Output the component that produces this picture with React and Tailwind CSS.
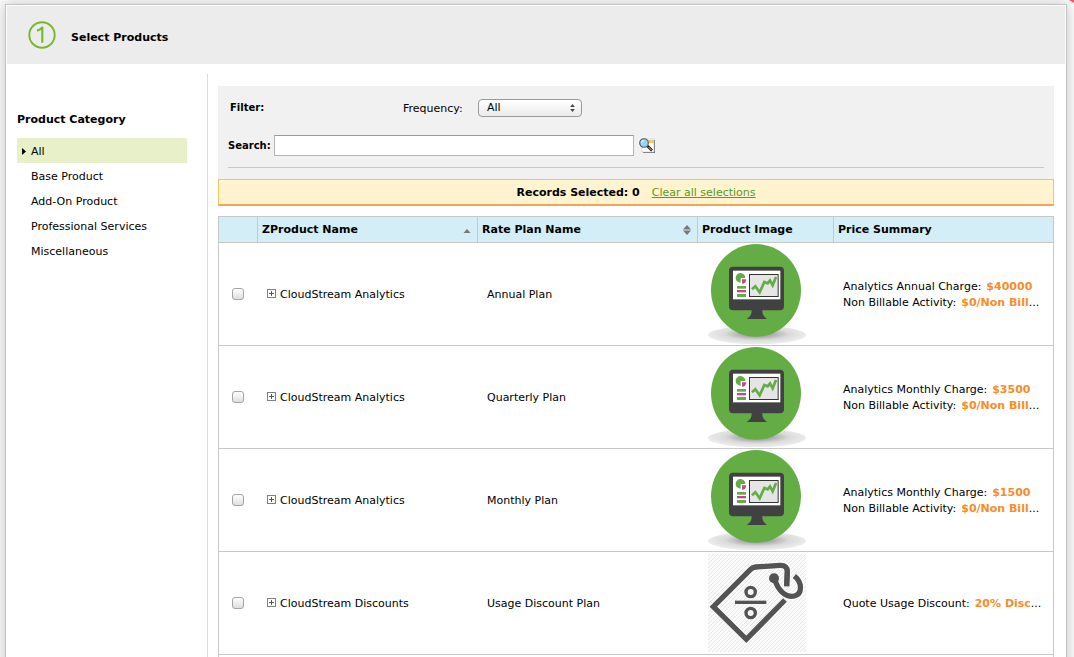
import React from "react";

const categories = ["All", "Base Product", "Add-On Product", "Professional Services", "Miscellaneous"];

const products = [
  {
    name: "CloudStream Analytics",
    plan: "Annual Plan",
    image: "analytics",
    prices: [
      { label: "Analytics Annual Charge:", value: "$40000" },
      { label: "Non Billable Activity:", value: "$0/Non Bill", more: true },
    ],
  },
  {
    name: "CloudStream Analytics",
    plan: "Quarterly Plan",
    image: "analytics",
    prices: [
      { label: "Analytics Monthly Charge:", value: "$3500" },
      { label: "Non Billable Activity:", value: "$0/Non Bill", more: true },
    ],
  },
  {
    name: "CloudStream Analytics",
    plan: "Monthly Plan",
    image: "analytics",
    prices: [
      { label: "Analytics Monthly Charge:", value: "$1500" },
      { label: "Non Billable Activity:", value: "$0/Non Bill", more: true },
    ],
  },
  {
    name: "CloudStream Discounts",
    plan: "Usage Discount Plan",
    image: "discount",
    prices: [{ label: "Quote Usage Discount:", value: "20% Disc", more: true }],
  },
];

function StepBadge() {
  return (
    <svg width="28" height="28" viewBox="0 0 28 28" fill="none" stroke="#78b82a" aria-hidden="true">
      <circle cx="14" cy="14" r="12.7" strokeWidth="1.9" />
      <path d="M9 9.600C11.800 9 13.800 7.800 14.300 5.800V21.800" strokeWidth="2.1" />
    </svg>
  );
}

function AnalyticsImage() {
  return (
    <svg width="98" height="100" viewBox="24 12 294 300" role="img" aria-label="Analytics monitor">
      <defs>
        <radialGradient id="floor" cx="0.5" cy="0.45" r="0.5">
          <stop offset="0" stopColor="#858585" />
          <stop offset="0.3" stopColor="#aaaaaa" />
          <stop offset="0.65" stopColor="#dadada" />
          <stop offset="1" stopColor="#ebebeb" />
        </radialGradient>
      </defs>
      <ellipse cx="171" cy="285" rx="147" ry="28" fill="url(#floor)" />
      <ellipse cx="168" cy="151" rx="135" ry="139" fill="#64ad45" />
      <rect x="87" y="80" width="165" height="131" rx="12" fill="#414143" />
      <path d="M155 208H187C186 222 191 230 201 237H140C151 230 156 222 155 208Z" fill="#414143" />
      <rect x="99" y="92" width="142" height="86" fill="#fff" />
      <path d="M122 114V128A14.500 14.500 0 1 1 136 114Z" fill="#64ad45" />
      <path d="M126 118H139A13 13 0 0 1 126 131Z" fill="#bf4b8b" />
      <rect x="111" y="138" width="27" height="8" fill="#64ad45" />
      <rect x="111" y="150" width="27" height="7" fill="#bf4b8b" />
      <rect x="111" y="162" width="27" height="9" fill="#64ad45" />
      <rect x="148.500" y="103.500" width="86" height="66" fill="#e5e5e5" stroke="#333" strokeWidth="3" />
      <path d="M156 148L166 139L179 157L193 126L203 130L210 121L218 136L228 111" fill="none" stroke="#64ad45" strokeWidth="8" />
    </svg>
  );
}

function DiscountImage() {
  return (
    <svg width="98" height="100" viewBox="24 15 294 300" role="img" aria-label="Discount tag">
      <defs>
        <pattern id="hatch" width="12" height="12" patternUnits="userSpaceOnUse">
          <path d="M-3 3L3 -3M0 12L12 0M9 15L15 9" stroke="#e8e8e8" strokeWidth="3" />
        </pattern>
      </defs>
      <rect x="24" y="18" width="294" height="294" fill="#fafafa" />
      <rect x="24" y="18" width="294" height="294" fill="url(#hatch)" />
      <path d="M255 156L139 274L40 176L151 65Q158 58 167 57L240 52Q261 51 262 70L260 115" fill="none" stroke="#fff" strokeWidth="20" />
      <path d="M255 156L139 274L40 176L151 65Q158 58 167 57L240 52Q261 51 262 70L260 115" fill="none" stroke="#535353" strokeWidth="16" />
      <path d="M224 92C234 132 261 149 283 144C307 139 308 103 283 84" fill="none" stroke="#fff" strokeWidth="22" />
      <path d="M262 66L260 114" stroke="#535353" strokeWidth="15" />
      <circle cx="222" cy="91" r="15" fill="#535353" />
      <path d="M224 92C234 132 261 149 283 144C307 139 308 103 283 84" fill="none" stroke="#535353" strokeWidth="16" />
      <g fill="none" stroke="#535353">
        <path d="M105 163H199" strokeWidth="10" />
        <circle cx="152" cy="132" r="14" strokeWidth="10" />
        <circle cx="152" cy="195" r="14" strokeWidth="10" />
      </g>
    </svg>
  );
}

function LookupIcon() {
  return (
    <svg width="17" height="16" viewBox="0 0 17 16" aria-hidden="true">
      <path d="M4 2H16V15H4Z" fill="#6e6e6e" />
      <path d="M3 1H15V14H3Z" fill="#fff" stroke="#c4c4c4" strokeWidth="0.6" />
      <path d="M8 2H15V5H8Z" fill="#f9c767" />
      <path d="M8.500 8L13 12.500" stroke="#222" strokeWidth="2.6" />
      <path d="M9.500 9L12.500 12" stroke="#d9b466" strokeWidth="1" />
      <circle cx="5" cy="5" r="4.300" fill="#9ed3ee" stroke="#3b5f80" strokeWidth="1.100" />
      <path d="M2.500 4.800A2.600 2.600 0 0 1 5 2.500" fill="none" stroke="#e4f6ff" strokeWidth="1.200" />
    </svg>
  );
}

function ExpandIcon() {
  return (
    <svg width="9" height="9" viewBox="0 0 9 9" fill="none" stroke="#808080" aria-hidden="true" shapeRendering="crispEdges">
      <rect x="0.500" y="0.500" width="8" height="8" />
      <path d="M2 4.500H7M4.500 2V7" stroke="#555" />
    </svg>
  );
}

function SortIcon({ both }) {
  return (
    <svg width="8" height="10" viewBox="0 0 8 10" fill="#777" aria-hidden="true">
      {both ? <path d="M4 0L8 4.500H0ZM4 10L8 5.500H0Z" /> : <path d="M4 4L7.500 8H0.500Z" />}
    </svg>
  );
}

function HeaderCell({ children, sort, last }) {
  return (
    <th
      scope="col"
      className={
        last
          ? "h-[26px] border-b border-[#c8c8c8] px-1 text-left font-bold"
          : "h-[26px] border-r border-b border-[#c8c8c8] px-1 text-left font-bold"
      }
    >
      {sort ? (
        <button type="button" className="flex w-full items-center justify-between pr-[2px] font-bold">
          {children}
          <SortIcon both={sort === "both"} />
        </button>
      ) : (
        children
      )}
    </th>
  );
}

function ProductRow({ product }) {
  return (
    <tr className="h-[103px]">
      <td className="border-b border-[#c8c8c8] pl-[13px]">
        <input
          type="checkbox"
          aria-label={`Select ${product.name} ${product.plan}`}
          className="block size-3 appearance-none rounded-[3px] border border-[#a4a4a4] bg-linear-to-b from-white to-[#dedede] checked:bg-[#78b82a]"
        />
      </td>
      <td className="border-b border-[#c8c8c8] pt-[2px] pl-[9px]">
        <button type="button" aria-label="Expand product" className="mr-1 inline-block">
          <ExpandIcon />
        </button>
        {product.name}
      </td>
      <td className="border-b border-[#c8c8c8] pt-[2px] pl-[9px]">{product.plan}</td>
      <td className="border-b border-[#c8c8c8] pl-[10px] [&>svg]:block">
        {product.image === "analytics" ? <AnalyticsImage /> : <DiscountImage />}
      </td>
      <td className="border-b border-[#c8c8c8] pt-[2px] pl-[9px] leading-4 whitespace-nowrap">
        {product.prices.map((price) => (
          <div key={price.label} className="flex gap-[5px]">
            <span>{price.label}</span>
            <span>
              <b className="text-[#fa8c28]">{price.value}</b>
              {price.more && "..."}
            </span>
          </div>
        ))}
      </td>
    </tr>
  );
}

export default function App() {
  return (
    <div className="relative flex h-screen flex-col overflow-hidden bg-[#fafafa] pt-1 pr-[7px] pl-[5px] font-['Verdana','DejaVu_Sans',sans-serif] text-[11px] leading-4 text-black">
      <svg className="absolute top-0 right-0" width="5" height="3" viewBox="0 0 5 3" aria-hidden="true">
        <path d="M0 0H5V3Z" fill="#f0525f" />
      </svg>
      <div className="-mb-4 flex min-h-0 flex-1 flex-col border border-[#c4c4c4] bg-white p-px shadow-[0_0_12px_rgba(0,0,0,0.22)]">
        <header className="flex h-[58px] shrink-0 items-center gap-[15px] bg-[#ececec] pl-[21px]">
          <StepBadge />
          <h1 className="pt-[6px] font-bold">Select Products</h1>
        </header>

        <div className="flex min-h-0 flex-1 pt-[10px]">
          <nav className="w-[201px] shrink-0 border-r border-[#dcdcdc] pt-[38px] pr-5 pl-[10px]">
            <h2 className="mb-[10px] font-bold">Product Category</h2>
            <ul>
              {categories.map((category, index) => (
                <li key={category}>
                  <a
                    href="#"
                    className={
                      index === 0
                        ? "flex h-[25px] items-center gap-[5px] bg-[#e7f0c8] pt-[2px] pl-[5px]"
                        : "flex h-[25px] items-center pt-[2px] pl-[14px]"
                    }
                  >
                    {index === 0 && (
                      <svg width="4" height="7" viewBox="0 0 4 7" aria-hidden="true">
                        <path d="M0 0L4 3.500L0 7Z" />
                      </svg>
                    )}
                    {category}
                  </a>
                </li>
              ))}
            </ul>
          </nav>

          <main className="flex min-w-0 flex-1 flex-col pt-3 pr-[11px] pl-[10px]">
            <form className="shrink-0 bg-[#f1f1f1] px-[10px] pt-[13px] pb-[11px]">
              <div className="flex h-[18px] items-center">
                <span className="w-[175px] pl-[2px] text-[10px] font-bold">Filter:</span>
                <label htmlFor="frequency" className="w-[75px] pt-[2px]">
                  Frequency:
                </label>
                <div className="relative">
                  <select
                    id="frequency"
                    className="block h-[18px] w-[104px] appearance-none rounded-[4px] border border-[#999] bg-linear-to-b from-white to-[#ebebeb] px-2 leading-4"
                  >
                    <option>All</option>
                  </select>
                  <svg
                    className="pointer-events-none absolute top-[5px] right-[7px]"
                    width="5"
                    height="8"
                    viewBox="0 0 5 8"
                    fill="#444"
                    aria-hidden="true"
                  >
                    <path d="M2.500 0L4.800 3H0.200ZM2.500 8L4.800 5H0.200Z" />
                  </svg>
                </div>
              </div>
              <div className="mt-[18px] flex h-[21px] items-center">
                <label htmlFor="search" className="w-[46px] text-[10px] font-bold">
                  Search:
                </label>
                <input
                  id="search"
                  type="text"
                  className="h-[21px] w-[360px] border border-[#b4b4b4] border-t-[#9a9a9a] bg-white px-1"
                />
                <button type="button" aria-label="Look up" className="ml-[5px]">
                  <LookupIcon />
                </button>
              </div>
              <hr className="mt-[11px] border-[#c8c8c8]" />
            </form>

            <div className="flex h-[27px] shrink-0 items-center justify-center gap-3 border border-b-2 border-[#f3c85a] border-b-[#f4a556] bg-[#fff4cf] pt-[2px]">
              <b>Records Selected: 0</b>
              <a href="#" className="text-[#5a9a1e] underline">
                Clear all selections
              </a>
            </div>

            <div className="mt-[10px] min-h-0 flex-1 border-x border-t border-[#c8c8c8]">
              <table className="w-full table-fixed border-separate border-spacing-0">
                <colgroup>
                  <col className="w-[39px]" />
                  <col className="w-[220px]" />
                  <col className="w-[220px]" />
                  <col className="w-[136px]" />
                  <col />
                </colgroup>
                <thead className="bg-[#d4eef7]">
                  <tr>
                    <HeaderCell />
                    <HeaderCell sort="up">ZProduct Name</HeaderCell>
                    <HeaderCell sort="both">Rate Plan Name</HeaderCell>
                    <HeaderCell>Product Image</HeaderCell>
                    <HeaderCell last>Price Summary</HeaderCell>
                  </tr>
                </thead>
                <tbody>
                  {products.map((product) => (
                    <ProductRow key={product.plan} product={product} />
                  ))}
                </tbody>
              </table>
            </div>
          </main>
        </div>
      </div>
    </div>
  );
}
